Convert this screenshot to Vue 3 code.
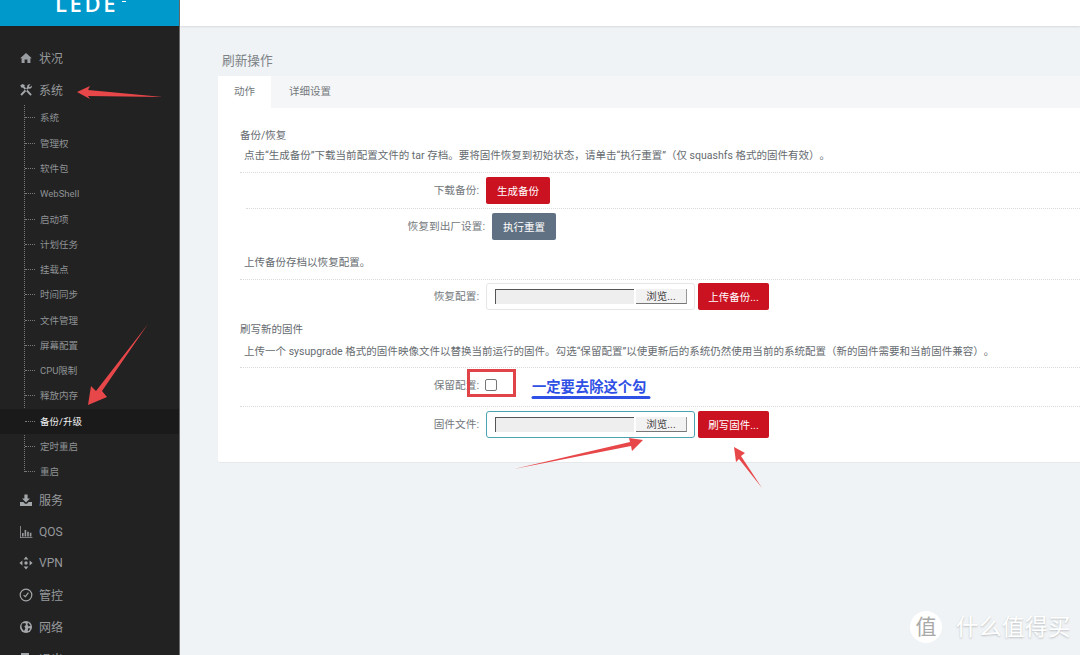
<template>
  <div class="page">
    <aside class="sidebar">
      <div class="logo"><span>LEDE</span><i class="tm"></i></div>
      <nav class="nav">
        <div class="top-item">
          <svg class="ico" viewBox="0 0 14 14"><path d="M7 2 L1.2 7.2 L2.6 7.2 L2.6 12 L5.6 12 L5.6 8.6 L8.4 8.6 L8.4 12 L11.4 12 L11.4 7.2 L12.8 7.2 Z" fill="#9a9da1"/></svg>
          状况
        </div>
        <div class="top-item">
          <svg class="ico" viewBox="0 0 14 14"><path d="M1.2 2.6 L3.6 1 L6 2.2 L5.2 3.2 L12.8 11.4 L11.4 12.8 L3.8 4.6 L2.8 5 Z M12.8 2.4 L10.9 4.2 L9.8 3.2 L11.4 1.2 C9.4 .8 7.8 2.2 8.2 4.2 L1.4 11.2 L2.8 12.8 L9.6 5.6 C11.6 6.2 13.4 4.6 12.8 2.4 Z" fill="#a4a7aa"/></svg>
          系统
        </div>
        <ul class="sub-list">
          <li v-for="s in subItems" :key="s" class="sub-item" :class="{ active: s === '备份/升级' }">{{ s }}</li>
        </ul>
        <div class="top-item">
          <svg class="ico" viewBox="0 0 14 14"><path d="M5.4 1.5 H8.6 V5.5 H11 L7 9.5 L3 5.5 H5.4 Z M1 9 H4.4 L6 10.7 H8 L9.6 9 H13 V13 H1 Z" fill="#a4a7aa"/></svg>
          服务
        </div>
        <div class="top-item">
          <svg class="ico" viewBox="0 0 14 14"><path d="M1 1 H1.8 V12.2 H13.4 V13 H1 Z M3 8 H4.6 V11.4 H3 Z M5.6 5 H7.2 V11.4 H5.6 Z M8.2 6.8 H9.8 V11.4 H8.2 Z M10.8 7.8 H12.4 V11.4 H10.8 Z" fill="#9a9da1"/></svg>
          QOS
        </div>
        <div class="top-item">
          <svg class="ico" viewBox="0 0 14 14"><path d="M7 .4 L9.4 3.4 H4.6 Z M7 13.6 L4.6 10.6 H9.4 Z M.4 7 L3.4 4.6 V9.4 Z M13.6 7 L10.6 9.4 V4.6 Z" fill="#a4a7aa"/><circle cx="7" cy="7" r="1.7" fill="#a4a7aa"/></svg>
          VPN
        </div>
        <div class="top-item">
          <svg class="ico" viewBox="0 0 14 14"><circle cx="7" cy="7" r="5.8" fill="none" stroke="#a4a7aa" stroke-width="1.2"/><path d="M4.6 7.2 L6.4 8.6 L9.4 4.6" fill="none" stroke="#a4a7aa" stroke-width="1.2"/></svg>
          管控
        </div>
        <div class="top-item">
          <svg class="ico" viewBox="0 0 14 14"><circle cx="7" cy="7" r="6" fill="#a4a7aa"/><path d="M3 3.6 L6.4 3 L7 5 L5.4 6.2 L6.4 8.6 L5 11 L3 8.6 L2.4 6 Z M9 2.6 L11.6 5.4 L9.6 6.4 L8.4 4.4 Z M9.4 8 L11.2 8.4 L9.8 11 L8.6 10.4 Z" fill="#222"/></svg>
          网络
        </div>
        <div class="top-item">
          <svg class="ico" viewBox="0 0 14 14"><path d="M2 2 H10 V12 H2 Z" fill="#a4a7aa"/></svg>
          退出
        </div>
      </nav>
    </aside>

    <main class="main">
      <div class="topbar"></div>
      <div class="content">
        <h2 class="page-title">刷新操作</h2>
        <section class="card">
          <div class="tabs">
            <div class="tab active">动作</div>
            <div class="tab">详细设置</div>
          </div>
          <div class="card-body">
            <h3 class="sec-title">备份/恢复</h3>
            <p class="sec-desc">点击“生成备份”下载当前配置文件的 tar 存档。要将固件恢复到初始状态，请单击“执行重置”（仅 squashfs 格式的固件有效）。</p>
            <div class="row">
              <label class="row-label">下载备份:</label>
              <button class="btn red">生成备份</button>
            </div>
            <div class="row shifted">
              <label class="row-label">恢复到出厂设置:</label>
              <button class="btn slate">执行重置</button>
            </div>

            <p class="sec-desc upload-title">上传备份存档以恢复配置。</p>
            <div class="row upload-row">
              <label class="row-label">恢复配置:</label>
              <div class="file-box">
                <span class="file-path"></span>
                <span class="file-btn">浏览...</span>
              </div>
              <button class="btn red wide">上传备份...</button>
            </div>

            <h3 class="sec-title flash-title">刷写新的固件</h3>
            <p class="sec-desc flash-desc">上传一个 sysupgrade 格式的固件映像文件以替换当前运行的固件。勾选“保留配置”以使更新后的系统仍然使用当前的系统配置（新的固件需要和当前固件兼容）。</p>
            <div class="row keep-row">
              <label class="row-label">保留配置:</label>
              <span class="check"></span>
            </div>
            <div class="row last-row">
              <label class="row-label">固件文件:</label>
              <div class="file-box focused">
                <span class="file-path"></span>
                <span class="file-btn">浏览...</span>
              </div>
              <button class="btn red wide">刷写固件...</button>
            </div>
          </div>
        </section>
      </div>
    </main>

    <!-- 标注层 -->
    <svg class="marks" viewBox="0 0 1080 655" width="1080" height="655">
      <g fill="#e8474a">
        <polygon points="77,92 90,86 88,90 163,97 88,96 90,99" />
        <polygon points="148,324 102,391 107,397 88,405 91,386 96,391" />
        <polygon points="514,469 630,442 629,438 643,440 632,451 631,446" />
        <polygon points="762,488 741,456 745,453 734,447 736,462 739,459" />
      </g>
      <rect x="468.5" y="370.5" width="46" height="25" fill="none" stroke="#e04448" stroke-width="3" />
      <line x1="533" y1="397.5" x2="649" y2="397.5" stroke="#2f50e4" stroke-width="3" stroke-linecap="round" />
    </svg>
    <div class="note">一定要去除这个勾</div>

    <div class="watermark">
      <span class="wm-badge">值</span>
      <span class="wm-text">什么值得买</span>
    </div>
  </div>
</template>

<script setup>
const subItems = [
  '系统', '管理权', '软件包', 'WebShell', '启动项', '计划任务', '挂载点', '时间同步',
  '文件管理', '屏幕配置', 'CPU限制', '释放内存', '备份/升级', '定时重启', '重启'
];
</script>

<style>
html, body { margin: 0; background: #eff3f5; }
</style>

<style scoped>
.page {
  position: relative;
  display: flex;
  width: 1080px;
  height: 655px;
  overflow: hidden;
  font-family: Roboto, "Noto Sans CJK SC", sans-serif;
  text-spacing-trim: space-all;
  color: #6f7478;
  background: #eff3f5;
}

.sidebar {
  flex: 0 0 180px;
  box-sizing: border-box;
  height: 655px;
  background: #222;
  border-right: 1px solid #6b6b6b;
  overflow: hidden;
}
.logo {
  height: 26px;
  background: #0099cc;
  margin-right: -1px;
  padding-left: 55px;
  overflow: hidden;
  display: flex;
  align-items: flex-start;
  color: #fff;
  font-family: "Open Sans", sans-serif;
  font-size: 22px;
  letter-spacing: 2.6px;
  line-height: 22px;
  font-weight: 600;
}
.logo span { margin-top: -8px; }
.tm {
  width: 4px;
  height: 1px;
  background: #fff;
  margin: 1px 0 0 4px;
}
.nav { padding-top: 16px; }
.top-item {
  display: flex;
  align-items: center;
  height: 31.7px;
  padding-left: 19px;
  font-size: 12px;
  color: #96999c;
}
.ico { width: 14px; height: 14px; margin-right: 6px; }
.sub-list {
  list-style: none;
  margin: 0 0 -.6px;
  padding: 0;
  position: relative;
}
.sub-list::before {
  content: "";
  position: absolute;
  left: 24px;
  top: 0;
  bottom: 13px;
  border-left: 1px dotted #77797b;
}
.sub-item {
  position: relative;
  height: 25.29px;
  line-height: 25.29px;
  padding-left: 40px;
  font-size: 9.5px;
  color: #8f9295;
}
.sub-item::before {
  content: "";
  position: absolute;
  left: 25px;
  top: 12px;
  width: 10px;
  border-top: 1px dotted #77797b;
}
.sub-item.active {
  background: #1a1a1a;
  color: #f2f2f2;
}

.main { flex: 1; min-width: 0; }
.topbar {
  height: 26px;
  background: #fff;
  box-shadow: 0 1px 2px rgba(0, 0, 0, .1);
}
.content { padding: 25px 0 0 38px; }
.page-title {
  margin: 0;
  padding-left: 4px;
  height: 25px;
  line-height: 19px;
  font-size: 12.7px;
  font-weight: 400;
  color: #7d8287;
}

.card {
  background: #fff;
  border-radius: 3px;
  height: 387px;
  margin-right: -6px;
  border-bottom: 1px solid #e6e9eb;
  box-sizing: border-box;
}
.tabs {
  display: flex;
  height: 32px;
  background: #f5f6f7;
  border-radius: 3px 3px 0 0;
}
.tab {
  text-align: center;
  line-height: 32px;
  font-size: 10.5px;
  color: #73787c;
}
.tab.active { width: 53px; background: #fff; }
.tab:not(.active) { width: 78px; }

.card-body { padding: 20px 0 0 22px; }
.sec-title {
  margin: 0;
  font-size: 10.5px;
  font-weight: 400;
  line-height: 16px;
  color: #666b6f;
}
.sec-desc {
  margin: 4px 0 0 4px;
  font-size: 10.53px;
  line-height: 16px;
  color: #666b6f;
  white-space: nowrap;
}
.row {
  display: flex;
  align-items: center;
  gap: 7px;
  height: 35px;
  border-top: 1px dotted #d8dadc;
  margin-top: 8px;
}
.row + .row { margin-top: 0; }
.row-label {
  width: 239px;
  margin-bottom: 2px;
  text-align: right;
  font-size: 10.7px;
  color: #74797d;
}
.shifted { margin-left: 6px; }
.upload-title { margin-top: 11px; }
.upload-row { height: 33px; }
.flash-title { margin-top: 9px; }
.flash-desc { margin-top: 6px; }
.keep-row { height: 33px; padding-bottom: 5px; margin-top: 7px; }
.keep-row .row-label { margin-bottom: 0; }
.last-row { height: 35px; }

.btn {
  height: 27px;
  width: 64px;
  padding: 0;
  border: none;
  border-radius: 2px;
  color: #fff;
  font: inherit;
  font-size: 10.5px;
}
.red { background: #cb1220; }
.slate { background: #5f7182; }
.wide { width: 71px; margin-left: -4px; }

.file-box {
  display: flex;
  align-items: center;
  box-sizing: border-box;
  width: 209px;
  height: 27px;
  padding-left: 8px;
  border: 1px solid #e4e6e8;
  border-radius: 3px;
  background: #fff;
}
.file-box.focused { border-color: #4aa3b0; }
.file-path {
  width: 139px;
  height: 15px;
  box-sizing: border-box;
  background: #eee;
  border-top: 1px solid #555;
  border-left: 1px solid #555;
}
.file-btn {
  box-sizing: border-box;
  width: 51px;
  height: 15px;
  margin-left: 2px;
  line-height: 15px;
  text-align: center;
  font-size: 10.5px;
  color: #444;
  background: #f2f2f2;
  border-bottom: 1px solid #777;
  border-right: 1px solid #999;
}
.check {
  width: 10px;
  height: 10px;
  border: 1px solid #777;
  border-radius: 2px;
  background: #fff;
  margin-left: -1px;
}

.marks {
  position: absolute;
  left: 0;
  top: 0;
  pointer-events: none;
}
.note {
  position: absolute;
  left: 532px;
  top: 378px;
  font-size: 14.3px;
  line-height: 18px;
  font-weight: 700;
  color: #2f50e4;
  white-space: nowrap;
}
.watermark {
  position: absolute;
  left: 910px;
  top: 611px;
  display: flex;
  align-items: center;
  gap: 14px;
  color: #fff;
  text-shadow: 0 1px 2px rgba(0, 0, 0, .22);
}
.wm-badge {
  width: 32px;
  height: 32px;
  border-radius: 50%;
  background: #fff;
  color: #a9a9a9;
  text-align: center;
  line-height: 32px;
  font-size: 21px;
  text-shadow: none;
}
.wm-text { font-size: 22.5px; letter-spacing: .5px; line-height: 32px; }
</style>
